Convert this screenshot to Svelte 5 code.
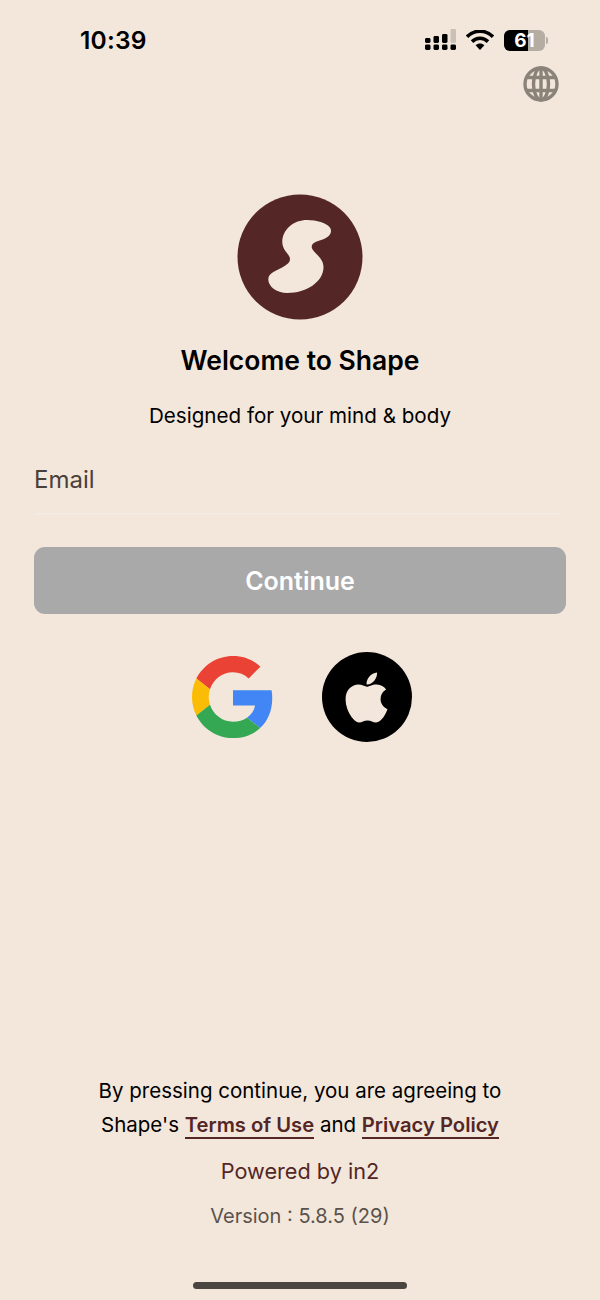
<script lang="ts">
  let email = '';

  const signalBars = [
    { x: 0, top: 9, h: 5, fill: '#000' },
    { x: 8.5, top: 7, h: 7, fill: '#000' },
    { x: 17, top: 5, h: 9, fill: '#000' },
    { x: 25.5, top: 0, h: 14, fill: '#c9c0b6' }
  ];
</script>

<div class="screen">
  <header class="status">
    <span class="time">10:39</span>
    <div class="status-icons">
      <svg class="signal" width="31" height="22" viewBox="0 0 31 22" aria-hidden="true">
        {#each signalBars as bar}
          <rect x={bar.x} y={bar.top} width="5.5" height={bar.h} rx="1.4" fill={bar.fill} />
          <rect x={bar.x} y="15.5" width="5.5" height="5.5" rx="1.4" fill="#000" />
        {/each}
      </svg>
      <svg class="wifi" width="28" height="20" viewBox="0 0 28 20" aria-hidden="true">
        <path d="M1 6.8C8.3-.6 19.7-.6 27 6.8" fill="none" stroke="#000" stroke-width="3.6" />
        <path d="M6 11.6c4.6-4.4 11.4-4.4 16 0" fill="none" stroke="#000" stroke-width="3.6" />
        <path d="M9.6 15.2c2.6-2.4 6.2-2.4 8.8 0L14 20z" fill="#000" />
      </svg>
      <div class="battery">
        <div class="battery-body">
          <div class="battery-fill"></div>
          <span>61</span>
        </div>
        <div class="battery-tip"></div>
      </div>
    </div>
  </header>

  <div class="lang-row">
    <svg width="36" height="36" viewBox="0 0 36 36" fill="none" stroke="#8b8379" stroke-width="3.4" aria-label="Language">
      <circle cx="18" cy="18" r="16" />
      <ellipse cx="18" cy="18" rx="7.5" ry="16" />
      <path d="M18 2v32M3.5 11.5h29M3.5 24.5h29" />
    </svg>
  </div>

  <main class="content">
    <svg class="logo" width="126" height="126" viewBox="0 0 126 126" aria-label="Shape">
      <circle cx="63" cy="63" r="62.5" fill="#542625" />
      <path
        d="M70 26C80 26 89 29 92.5 33C96 37.5 93 42 88 44.5C82 47.5 74.7 47.5 74.7 53C74.7 58 86.5 63 86.5 73C86.5 88 69 99 50.5 99C39 99 31.3 92 31.3 85.5C31.3 78.5 40 76.5 46 73C50 70.5 53 68.5 53 65C53 60.5 45.3 56.5 45.3 48.3C45.3 35 57 26 70 26Z"
        fill="#f3e7db"
      />
    </svg>
    <h1>Welcome to Shape</h1>
    <p class="tagline">Designed for your mind &amp; body</p>

    <label class="field">
      <input type="email" placeholder="Email" bind:value={email} />
    </label>

    <button class="continue" type="button">Continue</button>

    <div class="social">
      <button class="social-btn" type="button" aria-label="Continue with Google">
        <svg width="82" height="82" viewBox="0 0 48 48">
          <path fill="#EA4335" d="M24 9.5c3.54 0 6.71 1.22 9.21 3.6l6.85-6.85C35.9 2.38 30.47 0 24 0 14.62 0 6.51 5.38 2.56 13.22l7.98 6.19C12.43 13.72 17.74 9.5 24 9.5z" />
          <path fill="#4285F4" d="M46.98 24.55c0-1.57-.15-3.09-.38-4.55H24v9.02h12.94c-.58 2.96-2.26 5.48-4.78 7.18l7.73 6c4.51-4.18 7.09-10.36 7.09-17.65z" />
          <path fill="#FBBC05" d="M10.53 28.59c-.48-1.45-.76-2.99-.76-4.59s.27-3.14.76-4.59l-7.98-6.19C.92 16.46 0 20.12 0 24c0 3.88.92 7.54 2.56 10.78l7.97-6.19z" />
          <path fill="#34A853" d="M24 48c6.48 0 11.93-2.13 15.89-5.81l-7.73-6c-2.15 1.45-4.92 2.3-8.16 2.3-6.26 0-11.57-4.22-13.47-9.91l-7.98 6.19C6.51 42.62 14.62 48 24 48z" />
        </svg>
      </button>
      <button class="social-btn apple" type="button" aria-label="Continue with Apple">
        <svg width="43" height="57" viewBox="0 0 384 512">
          <path fill="#f3e7db" d="M318.7 268.7c-.2-36.7 16.4-64.4 50-84.8-18.8-26.9-47.2-41.7-84.7-44.6-35.5-2.8-74.3 20.7-88.5 20.7-15 0-49.4-19.7-76.4-19.7C63.3 141.2 4 184.8 4 273.5q0 39.3 14.4 81.2c12.8 36.7 59 126.7 107.2 125.2 25.2-.6 43-17.9 75.8-17.9 31.8 0 48.3 17.9 76.4 17.9 48.6-.7 90.4-82.5 102.6-119.3-65.2-30.7-61.7-90-61.7-91.9zm-56.6-164.2c27.3-32.4 24.8-61.9 24-72.5-24.1 1.4-52 16.4-67.9 34.9-17.5 19.8-27.8 44.3-25.6 71.9 26.1 2 49.9-11.4 69.5-34.3z" />
        </svg>
      </button>
    </div>
  </main>

  <footer class="foot">
    <p class="terms">By pressing continue, you are agreeing to</p>
    <p class="terms">Shape's <a href="#terms">Terms of Use</a> and <a href="#privacy">Privacy Policy</a></p>
    <p class="powered">Powered by in2</p>
    <p class="version">Version : 5.8.5 (29)</p>
    <div class="home-indicator"></div>
  </footer>
</div>

<style>
  :global(body) {
    background: #f3e7db;
  }

  .screen {
    height: 1300px;
    display: flex;
    flex-direction: column;
    background: #f3e7db;
    font-family: Inter, "Noto Sans", sans-serif;
    color: #000;
    overflow: hidden;
  }

  .status {
    height: 66px;
    padding: 14px 52px 0 80px;
    box-sizing: border-box;
    display: flex;
    align-items: center;
    justify-content: space-between;
  }

  .time {
    font-size: 24.5px;
    font-weight: 600;
    letter-spacing: 0.2px;
  }

  .status-icons {
    display: flex;
    align-items: center;
    gap: 10px;
  }

  .battery {
    display: flex;
    align-items: center;
    gap: 1px;
  }

  .battery-body {
    position: relative;
    width: 41px;
    height: 21px;
    border-radius: 6px;
    background: #b5aca2;
    overflow: hidden;
    display: flex;
    align-items: center;
    justify-content: center;
  }

  .battery-fill {
    position: absolute;
    left: 0;
    top: 0;
    bottom: 0;
    width: 24px;
    background: #000;
  }

  .battery-body span {
    position: relative;
    color: #fff;
    font-size: 19px;
    font-weight: 700;
  }

  .battery-tip {
    width: 2px;
    height: 7px;
    border-radius: 0 2px 2px 0;
    background: #b5aca2;
  }

  .lang-row {
    display: flex;
    justify-content: flex-end;
    padding-right: 41px;
  }

  .content {
    display: flex;
    flex-direction: column;
    align-items: center;
    padding: 92px 34px 0;
  }

  .logo {
    display: block;
  }

  h1 {
    margin: 23px 0 0;
    font-size: 26.5px;
    line-height: 34px;
    font-weight: 600;
  }

  .tagline {
    margin: 25px 0 0;
    font-size: 20.6px;
    line-height: 28px;
  }

  .field {
    align-self: stretch;
    display: block;
    margin: 29px 5px 0 0;
    border-bottom: 2px solid #f3ebe4;
    height: 54px;
  }

  input {
    width: 100%;
    height: 40px;
    padding: 0;
    border: none;
    outline: none;
    background: transparent;
    font: inherit;
    font-size: 24px;
    color: #4a403a;
  }

  input::placeholder {
    color: #4a403a;
    opacity: 1;
  }

  .continue {
    align-self: stretch;
    margin-top: 32px;
    height: 67px;
    border: none;
    border-radius: 11px;
    background: #a9a9a9;
    color: #fff;
    font: inherit;
    font-size: 25px;
    font-weight: 600;
  }

  .social {
    margin: 38px 0 0 3px;
    display: flex;
    align-items: center;
    gap: 48px;
  }

  .social-btn {
    display: flex;
    align-items: center;
    justify-content: center;
    padding: 0;
    border: none;
    background: none;
  }

  .social-btn svg {
    display: block;
  }

  .apple {
    width: 90px;
    height: 90px;
    border-radius: 50%;
    background: #000;
  }

  .foot {
    margin-top: auto;
    display: flex;
    flex-direction: column;
    align-items: center;
    text-align: center;
    font-size: 20.5px;
  }

  .foot p {
    margin: 0;
  }

  .terms {
    line-height: 34px;
  }

  .terms a {
    color: #542625;
    font-weight: 600;
    font-size: 20.2px;
    text-decoration: none;
    border-bottom: 2px solid #542625;
  }

  .powered {
    margin-top: 12px !important;
    line-height: 34px;
    color: #542625;
    font-size: 21.7px;
  }

  .version {
    margin-top: 11px !important;
    line-height: 34px;
    color: #5a524c;
    font-size: 20px;
  }

  .home-indicator {
    width: 214px;
    height: 7px;
    border-radius: 4px;
    background: #4a4540;
    margin: 49px 0 11px;
  }
</style>
